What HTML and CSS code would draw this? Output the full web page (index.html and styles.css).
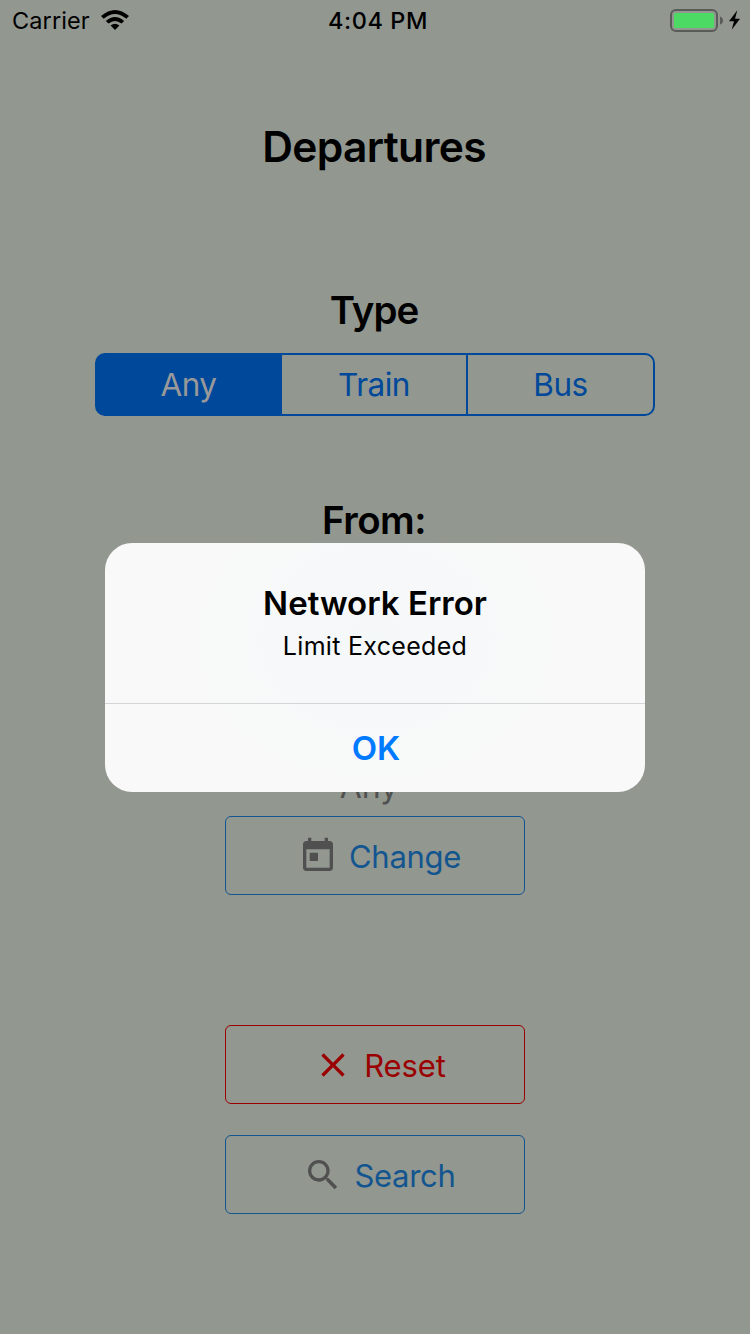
FILE: index.html
```
<!DOCTYPE html>
<html lang="en">
<head>
<meta charset="utf-8">
<title>Departures</title>
<link rel="stylesheet" href="styles.css">
</head>
<body>
<div class="screen">
  <header class="status">
    <div class="status-left">
      <span class="carrier">Carrier</span>
      <svg class="wifi" width="28" height="20" viewBox="0 0 28 20"><path d="M0 6.100Q14-6.100 28 6.100L25.300 8.800Q14-.9 2.700 8.800ZM4.800 11Q14 2.900 23.200 11L20.500 13.500Q14 8.400 7.500 13.500ZM9.600 15.500Q14 12 18.400 15.500L14 20Z"/></svg>
    </div>
    <span class="clock">4:04 PM</span>
    <div class="status-right">
      <svg width="72" height="24" viewBox="0 0 72 24">
        <rect x="1" y="1" width="46" height="21" rx="5" fill="none" stroke="#585b57" stroke-width="2"/>
        <rect x="4" y="4" width="40" height="15" rx="1.500" fill="#4cd964"/>
        <path d="M50 7.500Q53 8.500 53 11.500Q53 14.500 50 15.500Z" fill="#585b57"/>
        <path d="M67.300 1.300L59 12.300H64L61.700 20.700L70 9.700H65Z" fill="#000"/>
      </svg>
    </div>
  </header>
  <main class="content">
    <h1 class="title"><span>Departures</span></h1>
    <h2 class="heading heading-type"><span>Type</span></h2>
    <div class="segments">
      <div class="segment segment-active"><span>Any</span></div>
      <div class="segment"><span>Train</span></div>
      <div class="segment"><span>Bus</span></div>
    </div>
    <h2 class="heading heading-from"><span>From:</span></h2>
    <p class="value"><span>Any</span></p>
    <button class="button button-change">
      <svg class="icon" viewBox="0 0 24 24"><path d="M19 3h-1V1h-2v2H8V1H6v2H5c-1.110 0-1.990.9-1.990 2L3 19c0 1.100.89 2 2 2h14c1.100 0 2-.9 2-2V5c0-1.100-.9-2-2-2zm0 16H5V8h14v11zM7 10h5v5H7z"/></svg>
      <span class="label">Change</span>
    </button>
    <button class="button button-reset">
      <svg class="icon" viewBox="0 0 24 24"><path d="M19 6.410L17.590 5 12 10.590 6.410 5 5 6.410 10.590 12 5 17.590 6.410 19 12 13.410 17.590 19 19 17.590 13.410 12z"/></svg>
      <span class="label">Reset</span>
    </button>
    <button class="button button-search">
      <svg class="icon" viewBox="0 0 24 24"><path d="M15.500 14h-.79l-.28-.27C15.410 12.590 16 11.110 16 9.500 16 5.910 13.090 3 9.500 3S3 5.910 3 9.500 5.910 16 9.500 16c1.610 0 3.090-.59 4.230-1.570l.27.28v.79l5 4.990L20.490 19l-4.990-5zm-6 0C7.010 14 5 11.990 5 9.500S7.010 5 9.500 5 14 7.010 14 9.500 11.990 14 9.500 14z"/></svg>
      <span class="label">Search</span>
    </button>
  </main>
  <div class="alert" role="alertdialog">
    <div class="alert-body">
      <div class="alert-title"><span>Network Error</span></div>
      <div class="alert-message"><span>Limit Exceeded</span></div>
    </div>
    <div class="alert-action"><span>OK</span></div>
  </div>
</div>
</body>
</html>
```
FILE: styles.css
```
* { box-sizing: border-box; }
body { margin: 0; }
.screen {
  position: relative;
  width: 750px;
  height: 1334px;
  overflow: hidden;
  background: #929790;
  color: #000;
  font-family: Inter, "Liberation Sans", sans-serif;
}
.status {
  display: grid;
  grid-template-columns: 1fr auto 1fr;
  height: 40px;
  padding: 0 8px 0 12px;
  font-size: 23.5px;
  line-height: 41px;
}
.status-left { display: flex; align-items: flex-start; gap: 11px; }
.carrier { letter-spacing: 0.1px; }
.wifi { margin-top: 10px; }
.clock { padding-left: 2px; font-weight: 500; letter-spacing: 0.6px; }
.status-right { display: flex; justify-content: flex-end; padding-top: 9px; }
.content {
  display: flex;
  flex-direction: column;
  align-items: center;
}
.title {
  margin: 76px 0 0;
  padding-right: 2px;
  font-size: 42.5px;
  line-height: 62px;
  font-weight: 600;
  letter-spacing: -0.65px;
}
.heading {
  margin: 0;
  padding-right: 2px;
  font-size: 38.5px;
  line-height: 50px;
  font-weight: 600;
}
.heading-type { margin-top: 107px; letter-spacing: -1px; }
.segments {
  display: grid;
  grid-template-columns: 183px 186px 1fr;
  width: 560px;
  height: 63px;
  margin-top: 18px;
  overflow: hidden;
  border: 2px solid #00489a;
  border-radius: 10px;
  background: linear-gradient(90deg, #00489a 100px, transparent 100px);
}
.segment {
  border-left: 2px solid #00489a;
  color: #00489a;
  font-size: 31.5px;
  line-height: 59px;
  letter-spacing: -0.5px;
  text-align: center;
}
.segment-active { border-left: 0; background: #00489a; color: #999; }
.heading-from { margin-top: 79px; letter-spacing: -0.5px; }
.value {
  margin: 222px 0 0;
  padding-right: 12px;
  color: #4f504f;
  font-size: 32px;
  line-height: 40px;
}
.button {
  display: flex;
  align-items: center;
  justify-content: center;
  gap: 11px;
  width: 300px;
  height: 79px;
  padding: 0 0 0 9px;
  border: 1px solid #12558f;
  border-radius: 6px;
  background: transparent;
  color: #12558f;
  font-family: inherit;
  font-size: 31px;
  line-height: 40px;
}
.label { padding-top: 3px; letter-spacing: -0.3px; }
.icon { width: 40px; height: 40px; fill: #4f504f; }
.button-change { margin-top: 9px; }
.button-reset { margin-top: 130px; border-color: #9b0000; color: #9b0000; }
.button-reset .icon { fill: #9b0000; }
.button-reset .label { letter-spacing: -0.1px; }
.button-search { margin-top: 31px; }
.alert {
  position: absolute;
  left: 105px;
  top: 543px;
  width: 540px;
  height: 249px;
  border-radius: 27px;
  background: radial-gradient(ellipse 200px 160px at 270px 95px, #f5f8f9, #f9f9f9);
  text-align: center;
}
.alert-body {
  height: 161px;
  padding-top: 40px;
  border-bottom: 1px solid #d3d5d8;
}
.alert-title { font-size: 33px; line-height: 41px; font-weight: 600; }
.alert-message { font-size: 25px; line-height: 44px; letter-spacing: 0.3px; }
.alert-action {
  padding-left: 2px;
  color: #007aff;
  font-size: 33px;
  line-height: 89px;
  font-weight: 600;
}
```
